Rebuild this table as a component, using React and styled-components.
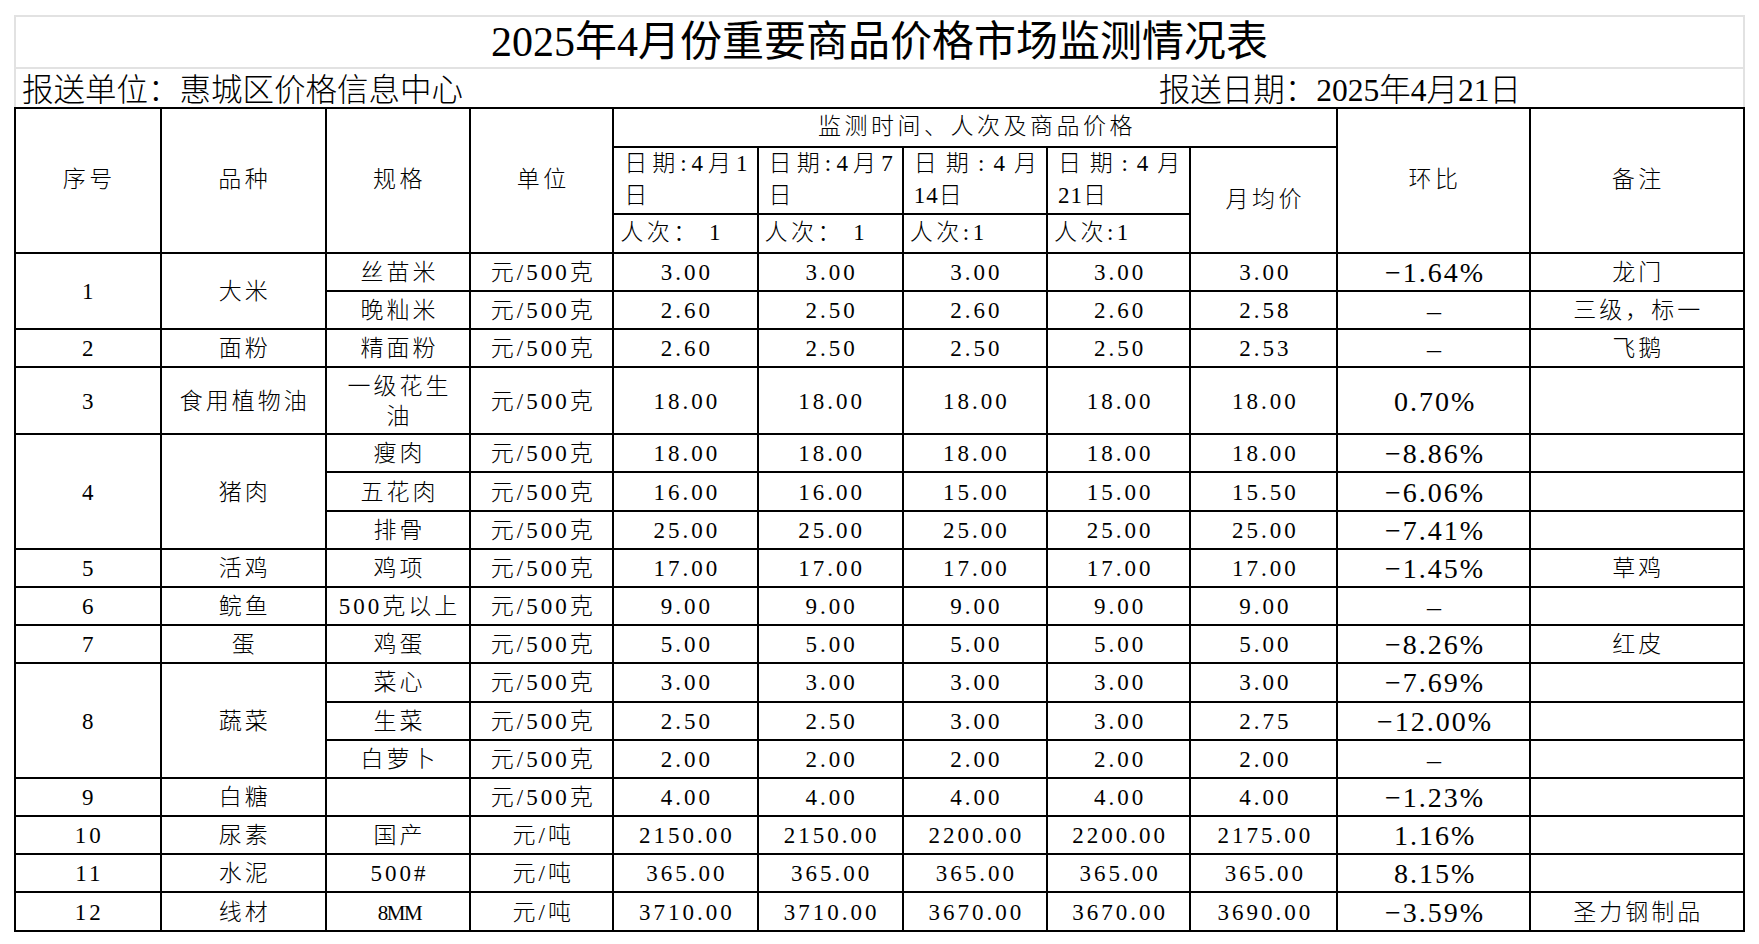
import React from "react";
import styled, { createGlobalStyle } from "styled-components";

const GlobalStyle = createGlobalStyle`
  html, body { margin: 0; padding: 0; background: #ffffff; }
  body {
    font-family: "Liberation Serif", "Noto Sans CJK SC", serif;
    color: #000;
  }
`;

const Sheet = styled.div`
  width: 1731px;
  padding: 15px 0 0 14px;
`;

const TitleBar = styled.div`
  box-sizing: border-box;
  height: 54px;
  border: 2px solid #e2e2e2;
  display: flex;
  align-items: center;
  justify-content: center;
  font-size: 42px;
  line-height: 1;
`;

const InfoBar = styled.div`
  box-sizing: border-box;
  height: 38px;
  border-left: 2px solid #e2e2e2;
  border-right: 2px solid #e2e2e2;
  display: flex;
  justify-content: space-between;
  align-items: flex-end;
  padding: 0 222px 1px 6px;
  font-size: 31.5px;
  font-weight: 300;
  line-height: 1;
`;

const InfoText = styled.div`
  white-space: nowrap;
`;

const Table = styled.table`
  border-collapse: collapse;
  table-layout: fixed;
  width: 1731px;
`;

const Cell = styled.td`
  border: 2px solid #000;
  padding: 2px 2px 0 5px;
  text-align: center;
  vertical-align: middle;
  font-size: ${(p) => (p.$pct ? "28px" : p.$tight ? "21px" : "23px")};
  font-weight: 300;
  letter-spacing: ${(p) => (p.$pct ? "2px" : p.$tight ? "-1.5px" : "3px")};
  line-height: 30px;
  white-space: nowrap;
  overflow: hidden;
`;

const HeadCell = styled.th`
  border: 2px solid #000;
  font-weight: 300;
  font-size: 23px;
  letter-spacing: 3.5px;
  line-height: 30px;
  padding: ${(p) => (p.$left ? "0 9px 0 6px" : "0 2px 0 5px")};
  text-align: ${(p) => (p.$left ? "left" : "center")};
  vertical-align: middle;
  white-space: nowrap;
  overflow: hidden;
`;

const HeadRow = styled.tr`
  height: ${(p) => p.$h}px;
`;

const DataRow = styled.tr`
  height: ${(p) => (p.$tall ? "67px" : "38.2px")};
`;

const DateBlock = styled.div`
  line-height: 32px;
  padding-left: 4px;
`;

const DateLine = styled.div`
  display: flex;
  justify-content: space-between;
  letter-spacing: 0;
`;

const DateTail = styled.div`
  text-align: left;
  letter-spacing: 1px;
`;

const widths = [145.5, 165, 144, 143, 144, 145, 144, 143, 147, 192, 214];

const dates = [
  { first: ["日", "期", ":", "4", "月", "1"], tail: "日", count: "人次： 1" },
  { first: ["日", "期", ":", "4", "月", "7"], tail: "日", count: "人次： 1" },
  { first: ["日", "期", ":", "4", "月"], tail: "14日", count: "人次:1" },
  { first: ["日", "期", ":", "4", "月"], tail: "21日", count: "人次:1" },
];

const x4 = (v) => [v, v, v, v];

const groups = [
  {
    no: "1",
    name: "大米",
    items: [
      { spec: "丝苗米", unit: "元/500克", p: x4("3.00"), avg: "3.00", pct: "−1.64%", note: "龙门" },
      { spec: "晚籼米", unit: "元/500克", p: ["2.60", "2.50", "2.60", "2.60"], avg: "2.58", pct: "–", note: "三级，标一" },
    ],
  },
  {
    no: "2",
    name: "面粉",
    items: [{ spec: "精面粉", unit: "元/500克", p: ["2.60", "2.50", "2.50", "2.50"], avg: "2.53", pct: "–", note: "飞鹅" }],
  },
  {
    no: "3",
    name: "食用植物油",
    tall: true,
    items: [{ spec: ["一级花生", "油"], unit: "元/500克", p: x4("18.00"), avg: "18.00", pct: "0.70%", note: "" }],
  },
  {
    no: "4",
    name: "猪肉",
    items: [
      { spec: "瘦肉", unit: "元/500克", p: x4("18.00"), avg: "18.00", pct: "−8.86%", note: "" },
      { spec: "五花肉", unit: "元/500克", p: ["16.00", "16.00", "15.00", "15.00"], avg: "15.50", pct: "−6.06%", note: "" },
      { spec: "排骨", unit: "元/500克", p: x4("25.00"), avg: "25.00", pct: "−7.41%", note: "" },
    ],
  },
  {
    no: "5",
    name: "活鸡",
    items: [{ spec: "鸡项", unit: "元/500克", p: x4("17.00"), avg: "17.00", pct: "−1.45%", note: "草鸡" }],
  },
  {
    no: "6",
    name: "鲩鱼",
    items: [{ spec: "500克以上", unit: "元/500克", p: x4("9.00"), avg: "9.00", pct: "–", note: "" }],
  },
  {
    no: "7",
    name: "蛋",
    items: [{ spec: "鸡蛋", unit: "元/500克", p: x4("5.00"), avg: "5.00", pct: "−8.26%", note: "红皮" }],
  },
  {
    no: "8",
    name: "蔬菜",
    items: [
      { spec: "菜心", unit: "元/500克", p: x4("3.00"), avg: "3.00", pct: "−7.69%", note: "" },
      { spec: "生菜", unit: "元/500克", p: ["2.50", "2.50", "3.00", "3.00"], avg: "2.75", pct: "−12.00%", note: "" },
      { spec: "白萝卜", unit: "元/500克", p: x4("2.00"), avg: "2.00", pct: "–", note: "" },
    ],
  },
  {
    no: "9",
    name: "白糖",
    items: [{ spec: "", unit: "元/500克", p: x4("4.00"), avg: "4.00", pct: "−1.23%", note: "" }],
  },
  {
    no: "10",
    name: "尿素",
    items: [{ spec: "国产", unit: "元/吨", p: ["2150.00", "2150.00", "2200.00", "2200.00"], avg: "2175.00", pct: "1.16%", note: "" }],
  },
  {
    no: "11",
    name: "水泥",
    items: [{ spec: "500#", unit: "元/吨", p: x4("365.00"), avg: "365.00", pct: "8.15%", note: "" }],
  },
  {
    no: "12",
    name: "线材",
    items: [{ spec: "8MM", unit: "元/吨", p: ["3710.00", "3710.00", "3670.00", "3670.00"], avg: "3690.00", pct: "−3.59%", note: "圣力钢制品" }],
  },
];

function Spec({ value }) {
  if (Array.isArray(value)) {
    return (
      <>
        {value[0]}
        <br />
        {value[1]}
      </>
    );
  }
  return value;
}

export default function App() {
  return (
    <>
      <GlobalStyle />
      <Sheet>
        <TitleBar>2025年4月份重要商品价格市场监测情况表</TitleBar>
        <InfoBar>
          <InfoText>报送单位：惠城区价格信息中心</InfoText>
          <InfoText>报送日期：2025年4月21日</InfoText>
        </InfoBar>
        <Table>
          <colgroup>
            {widths.map((w, i) => (
              <col key={i} style={{ width: w }} />
            ))}
          </colgroup>
          <thead>
            <HeadRow $h={38.7}>
              <HeadCell rowSpan={3}>序号</HeadCell>
              <HeadCell rowSpan={3}>品种</HeadCell>
              <HeadCell rowSpan={3}>规格</HeadCell>
              <HeadCell rowSpan={3}>单位</HeadCell>
              <HeadCell colSpan={5}>监测时间、人次及商品价格</HeadCell>
              <HeadCell rowSpan={3}>环比</HeadCell>
              <HeadCell rowSpan={3}>备注</HeadCell>
            </HeadRow>
            <HeadRow $h={67.3}>
              {dates.map((d, i) => (
                <HeadCell key={i} $left>
                  <DateBlock>
                    <DateLine>
                      {d.first.map((c, j) => (
                        <span key={j}>{c}</span>
                      ))}
                    </DateLine>
                    <DateTail>{d.tail}</DateTail>
                  </DateBlock>
                </HeadCell>
              ))}
              <HeadCell rowSpan={2}>月均价</HeadCell>
            </HeadRow>
            <HeadRow $h={38.7}>
              {dates.map((d, i) => (
                <HeadCell key={i} $left>
                  {d.count}
                </HeadCell>
              ))}
            </HeadRow>
          </thead>
          <tbody>
            {groups.map((g) =>
              g.items.map((it, idx) => (
                <DataRow key={g.no + "-" + idx} $tall={g.tall}>
                  {idx === 0 && <Cell rowSpan={g.items.length}>{g.no}</Cell>}
                  {idx === 0 && <Cell rowSpan={g.items.length}>{g.name}</Cell>}
                  <Cell $tight={it.spec === "8MM"}>
                    <Spec value={it.spec} />
                  </Cell>
                  <Cell>{it.unit}</Cell>
                  {it.p.map((v, k) => (
                    <Cell key={k}>{v}</Cell>
                  ))}
                  <Cell>{it.avg}</Cell>
                  <Cell $pct>{it.pct}</Cell>
                  <Cell>{it.note}</Cell>
                </DataRow>
              ))
            )}
          </tbody>
        </Table>
      </Sheet>
    </>
  );
}
